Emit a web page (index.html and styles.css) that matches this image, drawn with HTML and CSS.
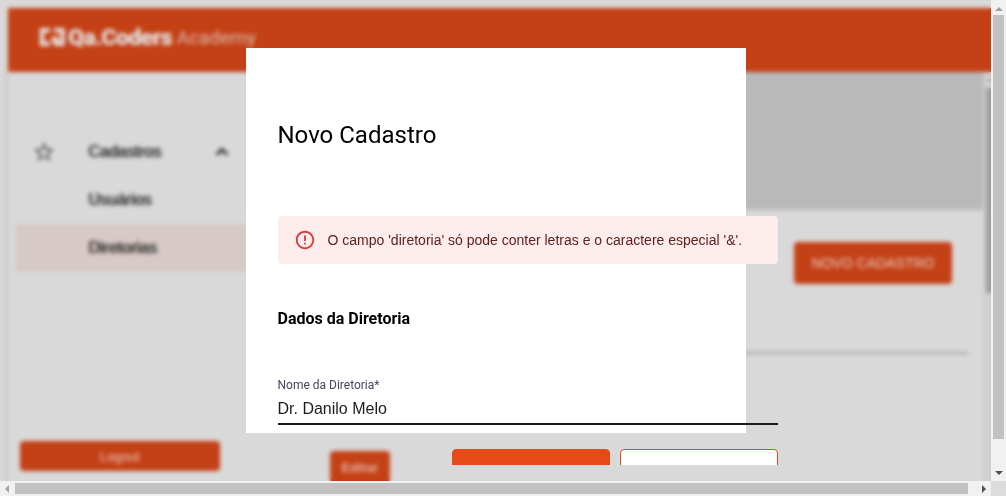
FILE: index.html
```html
<!DOCTYPE html>
<html lang="pt-BR">
<head>
<meta charset="utf-8">
<meta name="viewport" content="width=device-width, initial-scale=1">
<title>Novo Cadastro</title>
<link rel="stylesheet" href="styles.css">
</head>
<body>
<div class="frame">
  <div class="viewport">
    <div class="app">
      <header class="topbar">
        <svg class="logo-mark" viewBox="0 0 26 18" width="26" height="18" aria-hidden="true">
          <path d="M11 2.200H3v13.600h8M15 2.200h8.500v13.600H15M19.500 11H15v4" fill="none" stroke="currentColor" stroke-width="4.400"/>
        </svg>
        <span class="logo-name">Qa.Coders</span>
        <span class="logo-sub">Academy</span>
      </header>
      <div class="body">
        <nav class="sidebar">
          <a class="item" href="#cadastros">
            <svg class="star" viewBox="0 0 24 24" width="24" height="24" aria-hidden="true"><path fill="currentColor" d="m22 9.24-7.19-.62L12 2 9.19 8.63 2 9.24l5.46 4.73L5.82 21 12 17.27 18.18 21l-1.63-7.03L22 9.24zM12 15.4l-3.76 2.27 1-4.28-3.32-2.88 4.38-.38L12 6.1l1.71 4.04 4.38.38-3.32 2.88 1 4.28L12 15.4z"/></svg>
            <span class="item-text">Cadastros</span>
            <svg viewBox="0 0 24 24" width="24" height="24" aria-hidden="true"><path d="m6.700 14.700 5.300-5.300 5.300 5.300" fill="none" stroke="currentColor" stroke-width="3"/></svg>
          </a>
          <a class="item sub" href="#usuarios">Usuários</a>
          <a class="item sub active" href="#diretorias">Diretorias</a>
          <button class="btn logout" type="button">Logout</button>
        </nav>
        <main class="main">
          <div class="banner"></div>
          <div class="actions"><button class="btn create" type="button">NOVO CADASTRO</button></div>
          <hr class="rule">
          <div class="row"><button class="btn edit" type="button">Editar</button></div>
        </main>
        <div class="inner-bar"><span class="inner-up"></span><span class="inner-thumb"></span></div>
      </div>
    </div>
    <div class="backdrop">
      <section class="dialog" role="dialog" aria-labelledby="dialog-title">
        <form class="form">
          <h1 class="title" id="dialog-title">Novo Cadastro</h1>
          <div class="alert" role="alert">
            <svg viewBox="0 0 24 24" width="22" height="22" aria-hidden="true"><path fill="currentColor" d="M11 15h2v2h-2zm0-8h2v6h-2zm.99-5C6.47 2 2 6.48 2 12s4.47 10 9.99 10C17.52 22 22 17.52 22 12S17.52 2 11.990 2zM12 20c-4.420 0-8-3.580-8-8s3.580-8 8-8 8 3.580 8 8-3.580 8-8 8z"/></svg>
            <span>O campo 'diretoria' só pode conter letras e o caractere especial '&amp;'.</span>
          </div>
          <h2 class="subtitle">Dados da Diretoria</h2>
          <label class="label" for="nome">Nome da Diretoria*</label>
          <input class="input" id="nome" type="text" value="Dr. Danilo Melo">
          <div class="buttons">
            <button class="primary" type="submit" aria-label="Salvar"></button>
            <button class="secondary" type="button" aria-label="Cancelar"></button>
          </div>
        </form>
      </section>
    </div>
  </div>
  <div class="bar bar-v"><span class="arrow up"></span><span class="thumb"></span><span class="arrow down"></span></div>
  <div class="bar bar-h"><span class="arrow left"></span><span class="thumb"></span><span class="arrow right"></span></div>
  <div class="corner"></div>
</div>
</body>
</html>
```
FILE: styles.css
```css
* { box-sizing: border-box; }
body { margin: 0; font-family: "Liberation Sans", Arial, sans-serif; }
button, input { font-family: inherit; margin: 0; }

.frame {
  display: grid;
  grid-template-columns: minmax(0, 1fr) 15px;
  grid-template-rows: minmax(0, 1fr) 15px;
  height: 100vh;
}
.viewport { position: relative; overflow: hidden; background: #d9d9d9; }

/* Page behind the dialog */
.app { display: flex; flex-direction: column; height: 100%; padding: 8px 0 0 8px; }
.topbar {
  display: flex; align-items: center; flex: none;
  height: 64px; padding: 0 31px 6px;
  background: #c44015; color: #e4dedc;
}
.logo-name { margin-left: 3px; font: 700 22px "Roboto", sans-serif; text-shadow: 1px 0; }
.logo-sub { margin-left: 5px; font: 400 19px "Roboto", sans-serif; color: #dcb8ac; }
.body { display: flex; flex: 1; min-height: 0; }

.sidebar {
  display: flex; flex-direction: column; flex: none;
  width: 240px; padding: 56px 0 10px 8px;
  box-shadow: -3px 0 0 #c9c9c9;
}
.item {
  display: flex; align-items: center;
  height: 48px; padding: 0 14px 0 16px;
  color: #333; font-size: 16px; text-decoration: none;
  text-shadow: 1px 0 #444;
}
.star { color: #555; }
.item-text { flex: 1; margin-left: 32px; }
.sub { padding-left: 72px; }
.active { background: #d7c9c5; }

.btn { border: 0; border-radius: 4px; background: #c44015; color: #e8cbc1; }
.logout { width: 200px; height: 30px; margin: auto 0 0 4px; font-size: 13px; }

.main { flex: 1; min-width: 0; overflow: hidden; }
.banner { height: 138px; background: #b9b9b9; }
.actions { display: flex; justify-content: flex-end; padding: 32px 31px 0; }
.create { width: 158px; height: 42px; font-size: 14px; }
.rule { height: 2px; margin: 68px 15px 0; border: 0; background: #a4a4a4; }
.row { padding: 97px 0 0 82px; }
.edit { width: 60px; height: 32px; padding: 0; font-size: 13px; font-weight: 700; color: #e2b0a0; }

.inner-bar { flex: none; width: 8px; padding: 6px 0 0 3px; background: #cfcfcf; }
.inner-up { display: block; height: 4px; margin: 0 0 6px 2px; background: #b4b4b4; }
.inner-thumb { display: block; height: 205px; background: #9e9e9e; }

/* Dialog */
.backdrop {
  position: absolute; inset: 0;
  display: flex; align-items: center; justify-content: center;
  backdrop-filter: blur(2px);
}
.dialog { width: 500px; height: 80%; background: #fff; }
.form {
  box-sizing: content-box;
  width: 100%; height: 100%; padding: 32px 0 0 32px;
  overflow: hidden;
}
.title { margin: 40px 0 0; font: 400 24px/30px "Roboto", sans-serif; color: #000; }
.alert {
  display: flex; align-items: center; gap: 12px;
  height: 48px; margin-top: 66px; padding: 0 16px;
  border-radius: 4px; background: #fdecec; color: #5f2120;
  font-size: 14px; line-height: 20px; white-space: nowrap;
}
.alert svg { flex: none; color: #d83c3c; }
.subtitle { margin: 44px 0 0; font: 700 16px/22px "Roboto", sans-serif; color: #000; }
.label { display: block; margin-top: 46px; font: 400 12px/18px "Roboto", sans-serif; color: #49455c; }
.input {
  display: block; width: 100%; height: 31px; padding: 1px 0 0;
  border: 0; border-bottom: 2px solid #1c1b1f; border-radius: 0;
  background: transparent; color: #1c1b1f; font-size: 16px; outline: 0;
}
.buttons { display: flex; justify-content: flex-end; gap: 10px; margin-top: 24px; }
.primary, .secondary { width: 158px; height: 42px; border: 1px solid #e64a19; border-radius: 4px; }
.primary { background: #e64a19; }
.secondary { background: #fff; }

/* Scroll bars */
.bar { display: flex; align-items: center; background: #f1f1f1; }
.bar-v { flex-direction: column; }
.bar-v .thumb { flex: 1; width: 11px; margin-bottom: 32px; background: #c1c1c1; }
.bar-h .thumb { flex: 1; height: 11px; margin-right: 8px; background: #c1c1c1; }
.arrow { flex: none; border: 4px solid transparent; }
.up { margin: 3px 0 4px; border-bottom-color: #a3a3a3; }
.down { margin-bottom: 2px; border-top-color: #505050; }
.left { margin: 0 6px 0 1px; border-right-color: #a3a3a3; }
.right { margin-left: 6px; margin-right: 1px; border-left-color: #505050; }
.corner { background: #dcdcdc; }
```
